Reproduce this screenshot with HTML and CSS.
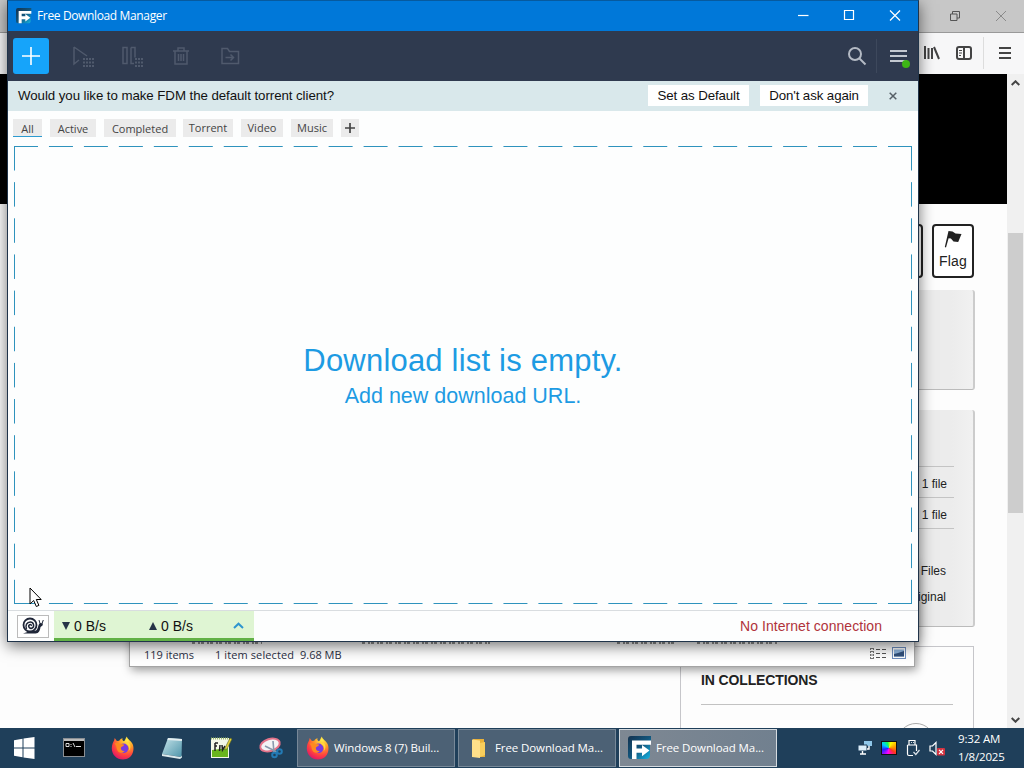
FILE: index.html
```html
<!DOCTYPE html>
<html lang="en">
<head>
<meta charset="UTF-8" />
<meta name="viewport" content="width=device-width, initial-scale=1" />
<title>Free Download Manager</title>
<link rel="stylesheet" href="styles.css">
</head>
<body>

<!-- shared icons -->
<svg class="defs" width="0" height="0">
  <defs>
    <radialGradient id="fox" cx="70%" cy="15%" r="90%">
      <stop offset="0" stop-color="#fff04a"/><stop offset=".4" stop-color="#ff9a26"/><stop offset=".75" stop-color="#ff4040"/><stop offset="1" stop-color="#e01a66"/>
    </radialGradient>
    <linearGradient id="fdmBg" x1="0" y1="0" x2="1" y2="1">
      <stop offset="0" stop-color="#14324f"/><stop offset=".5" stop-color="#12557c"/><stop offset="1" stop-color="#16b8e8"/>
    </linearGradient>
    <linearGradient id="note" x1="0" y1="0" x2="1" y2="1">
      <stop offset="0" stop-color="#c6e4ea"/><stop offset="1" stop-color="#4f95aa"/>
    </linearGradient>
  </defs>
  <symbol id="firefox" viewBox="0 0 24 24">
    <path d="M12 23.4C5.600 23.400.8 18.600.8 12.400.8 9 2 6.300 3.100 4.500L3.700 2l2.200 2.900 2.300-.1C9 3.200 10.400 2.500 11.600 2.200 10.900 3.600 11.600 4.600 13 5.200 14.500 3.800 14.500 2 15.800.4 16.500 3.400 20.200 4.700 21.700 8.200 23.900 13.400 21.900 23.400 12 23.400z" fill="url(#fox)"/>
    <circle cx="12.600" cy="12.300" r="4.800" fill="#7a3be0"/>
    <path d="M3.500 7.500c2-1 4-.7 5.200.3l4.300.7c.3 1.600-2.500 2-3.100 3.200-.4 2.200 1.500 3.700 3.700 3.200-1.800 2.900-6.600 2.300-7.700-1.700-.4-2-.4-3.700-2.400-5.700z" fill="#ff8a1f"/>
    <path d="M14.500 7.500c3 1 4.600 4.500 3.200 7.500 2.500-2.500 2.200-6.500-.5-8.500z" fill="#ffd83d"/>
  </symbol>
  <symbol id="fdm" viewBox="0 0 24 24">
    <path d="M0 3q0-3 3-3h20v5h-1v14q0 4-4 4H3q-3 0-3-3z" fill="url(#fdmBg)"/>
    <path d="M4 4.500h19v4.300H8.500v3.700H14V9l7.500 5.600L14 20.200v-3.500H8.500V23H4z" fill="#fff"/>
  </symbol>
</svg>

<div class="desktop">

  <!-- Browser window at the back -->
  <section class="browser">
    <div class="browser-title">
      <svg class="win-restore" width="12" height="12" viewBox="0 0 12 12"><path d="M1.500 4h6.500v6.500H1.500zM3.500 4V1.500H10.500V8H8" /></svg>
      <svg class="win-x" width="12" height="12" viewBox="0 0 12 12"><path d="M1 1l10 10M11 1L1 11"/></svg>
    </div>
    <div class="browser-bar">
      <svg width="18" height="16" viewBox="0 0 18 16"><path d="M2 1v13M5.500 3v11M9 3v11M11 2l5 12" /></svg>
      <svg width="16" height="14" viewBox="0 0 16 14"><rect x="1" y="1" width="14" height="12" rx="2"/><path d="M8 1v12"/><path class="thin" d="M3 4.500h3M3 7h3M3 9.500h2"/></svg>
      <i class="bar-sep"></i>
      <svg width="12" height="12" viewBox="0 0 12 12"><path d="M0 1h12M0 6h12M0 11h12"/></svg>
    </div>
    <div class="browser-view">
      <div class="page">
        <div class="hero"></div>
        <div class="actions">
          <div class="action"></div>
          <div class="action">
            <svg width="18" height="18" viewBox="0 0 18 18"><path d="M4.500 1l4 .5 3 2 6 .5-3.300 8-4.700-.5-2.600-3-2.300-.2L2 17.500.8 17z" fill="#222"/></svg>
            <span>Flag</span>
          </div>
        </div>
        <div class="card views"></div>
        <div class="card options">
          <div class="opt">1 file</div>
          <div class="opt">1 file</div>
          <div class="more">Files</div>
          <div class="more">Original</div>
        </div>
        <div class="collections">
          <h5>IN COLLECTIONS</h5>
          <div class="thumb"></div>
        </div>
      </div>
      <div class="scroll">
        <svg width="9" height="6" viewBox="0 0 9 6"><path d="M.7 5L4.500 1.300 8.300 5"/></svg>
        <div class="track"><div class="thumb-bar"></div></div>
        <svg width="9" height="6" viewBox="0 0 9 6"><path d="M.7 1L4.500 4.700 8.300 1"/></svg>
      </div>
    </div>
  </section>

  <!-- File explorer, only its status bar shows -->
  <section class="explorer">
    <div class="peek"><i></i><i></i><i></i><i></i></div>
    <div class="explorer-status">
      <span class="count">119 items</span>
      <span class="selected">1 item selected</span>
      <span class="size">9.68 MB</span>
      <svg width="18" height="13" viewBox="0 0 18 13"><path d="M1.500 1v11M4.500 1v11" stroke="#777" stroke-dasharray="2 1"/><path d="M1 1.500h4M1 4.500h4M1 8h4M1 11.500h4" stroke="#777"/><path d="M7 2.500h10M7 6.500h10M7 10.500h10" stroke="#555" stroke-dasharray="4 2"/></svg>
      <svg width="15" height="13" viewBox="0 0 15 13"><rect x=".5" y=".5" width="13" height="11" fill="#fff" stroke="#6f8fc0"/><path d="M2 2.500h10v7H2z" fill="#8fb4dc"/><path d="M2 9.500V7l4-1 6-2v5.500z" fill="#31507c"/></svg>
    </div>
  </section>

  <!-- FDM -->
  <section class="fdm">
    <div class="titlebar">
      <svg width="16" height="16"><use href="#fdm"/></svg>
      <span class="title">Free Download Manager</span>
      <div class="controls">
        <svg width="12" height="12" viewBox="0 0 12 12"><path d="M1 5.500h10.500"/></svg>
        <svg width="12" height="12" viewBox="0 0 12 12"><path d="M1.500.5h9v9h-9z"/></svg>
        <svg width="12" height="12" viewBox="0 0 12 12"><path d="M1 .5l10 10M11 .5L1 10.500"/></svg>
      </div>
    </div>

    <div class="toolbar">
      <button class="add" aria-label="Add"><svg width="18" height="18" viewBox="0 0 18 18"><path d="M9 0v18M0 9h18" stroke="#fff" stroke-width="1.600"/></svg></button>
      <svg class="tool" width="24" height="24" viewBox="0 0 24 24"><path d="M3 3v17l5-4M3 3l13 9"/><path class="dots" d="M12 15h11M12 18.500h11M12 22h11"/></svg>
      <svg class="tool" width="24" height="24" viewBox="0 0 24 24"><path d="M3 3.500h4v16H3zM11 3.500h4v10M11 3.500v16h3"/><path class="dots" d="M15 15h9M15 18.500h9M15 22h9"/></svg>
      <svg class="tool" width="24" height="24" viewBox="0 0 24 24"><path d="M4 7h16M9 7V4h6v3M6 7v13h12V7M9.500 10v7M12 10v7M14.500 10v7"/></svg>
      <svg class="tool" width="24" height="24" viewBox="0 0 24 24"><path d="M4 4.500h5.500l2 3h9v12H4zM7.500 13.500h8M12.500 10.500l3 3-3 3"/></svg>
      <svg class="search" width="20" height="20" viewBox="0 0 20 20"><circle cx="8" cy="8" r="6"/><path d="M12.500 12.500l6 6"/></svg>
      <div class="menu">
        <svg width="17" height="14" viewBox="0 0 17 14"><path d="M0 2h17M0 7h17M0 12h17" stroke="#c3c8d0" stroke-width="2"/></svg>
        <i class="dot"></i>
      </div>
    </div>

    <div class="banner">
      <span class="question">Would you like to make FDM the default torrent client?</span>
      <button class="set">Set as Default</button>
      <button class="dont">Don't ask again</button>
      <svg width="8" height="8" viewBox="0 0 8 8"><path d="M.7.700l6.600 6.600M7.300.700L.7 7.300"/></svg>
    </div>

    <div class="tabs">
      <span class="tab all">All</span>
      <span class="tab active-tab">Active</span>
      <span class="tab completed">Completed</span>
      <span class="tab torrent">Torrent</span>
      <span class="tab video">Video</span>
      <span class="tab music">Music</span>
      <span class="tab plus"><svg width="10" height="10" viewBox="0 0 10 10"><path d="M5 0v10M0 5h10" stroke="#444" stroke-width="1.700"/></svg></span>
    </div>

    <div class="dropzone">
      <svg class="dashes" width="899" height="459" viewBox="0 0 899 459">
        <path class="h" d="M0 .5h899M0 457.500h899"/>
        <path class="v" d="M.5 0v458M897.500 0v458"/>
      </svg>
      <div class="empty">Download list is empty.</div>
      <div class="hint">Add new download URL.</div>
    </div>

    <div class="bottom">
      <button class="snail" aria-label="Snail mode">
        <svg width="24" height="18" viewBox="0 0 24 18"><path d="M2 16.500h12.500c3.500 0 4.500-3 5-6.500l2-1.500.5-2-2.500-.5c-2.500 0-2 6-4.500 7.500L8 14.500z" fill="#1f2638"/><circle cx="9" cy="8" r="6.500" fill="#fff" stroke="#1f2638" stroke-width="1.800"/><path d="M5.500 12C4 8.500 5.800 5 9.300 5s4.600 4.800 1.500 6.200c-2.600.9-4.200-2.400-2.100-3.600 1.300-.4 1.900.5 1.300 1.300" fill="none" stroke="#1f2638" stroke-width="1.500"/><path d="M19 6.500l-1-3.500M21 6.500l1.300-3.500" stroke="#1f2638"/></svg>
      </button>
      <div class="speed">
        <svg width="8" height="8" viewBox="0 0 8 8"><path d="M0 0h8L4 8z" fill="#263347"/></svg>
        <span class="down">0 B/s</span>
        <svg width="8" height="8" viewBox="0 0 8 8"><path d="M0 8h8L4 0z" fill="#263347"/></svg>
        <span class="up">0 B/s</span>
        <svg class="chev" width="11" height="7" viewBox="0 0 11 7"><path d="M1 6l4.500-4.300L10 6" fill="none" stroke="#2f95cf" stroke-width="2"/></svg>
      </div>
      <span class="offline">No Internet connection</span>
    </div>
  </section>

  <svg class="cursor" width="13" height="21" viewBox="0 0 13 21"><path d="M1 1v16l3.700-3.500 2.600 6 2.600-1.100-2.600-5.900h4.900z" fill="#fff" stroke="#000"/></svg>

  <!-- Taskbar -->
  <footer class="taskbar">
    <div class="pins">
      <svg width="22" height="22" viewBox="0 0 22 22"><path d="M1 3.200l8.500-1.400v8.700H1zM10.500 1.600L21.500 0v10.500h-11zM1 11.500h8.500v8.700L1 18.800zM10.500 11.500h11V22l-11-1.600z" fill="#fff"/></svg>
      <svg width="24" height="20" viewBox="0 0 24 20"><rect x="1.500" y=".5" width="21" height="18" fill="#000" stroke="#8a8f94"/><path d="M2 2h20" stroke="#bbb" stroke-width="2"/><path d="M4 5.500h3v3H4zM9 6v1M9 8v1M11 5l2 4M14 8.500h5" stroke="#ddd" fill="none"/></svg>
      <svg width="24" height="24"><use href="#firefox"/></svg>
      <svg width="24" height="24" viewBox="0 0 24 24"><path d="M8 2l14 1-.5 18L2 18z" fill="url(#note)"/><path d="M8 2l14 1-.1 2L7.400 4z" fill="#e4eef0"/><path d="M2 18l18.500 3 1-1.500.5 2-2 1.500L2 20z" fill="#dce9ec"/></svg>
      <svg width="24" height="24" viewBox="0 0 24 24"><path d="M2 2h18v20H2z" fill="#f4f7e8"/><path d="M3 14l16-2v9H3z" fill="#69b51d"/><path d="M2 2.500h18" stroke="#9bb96b" stroke-dasharray="1 1" stroke-width="2"/><path d="M6 7v8M6 7h3M6 10h2M10.500 15l.5-6M13 9l.5 5 2.500-4" stroke="#222" fill="none" stroke-width="1.500"/><path d="M16 12l5-10 2 1-5 10-2 1z" fill="#e7d23c" stroke="#55651f" stroke-width=".6"/></svg>
      <svg width="26" height="24" viewBox="0 0 26 24"><ellipse cx="12" cy="9" rx="10" ry="6" transform="rotate(-17 12 9)" fill="#f3f3f5" stroke="#e4738a" stroke-width="2"/><path d="M7 10l12 6M15 5l1 12" stroke="#8999ad" stroke-width="1.600"/><circle cx="16.500" cy="19" r="2.300" fill="none" stroke="#237ab5" stroke-width="2"/><circle cx="21.500" cy="15.500" r="2.300" fill="none" stroke="#237ab5" stroke-width="2"/></svg>
    </div>
    <div class="task"><svg width="24" height="24"><use href="#firefox"/></svg><span>Windows 8 (7) Buil...</span></div>
    <div class="task folder"><svg width="24" height="24" viewBox="0 0 24 24"><path d="M6 3h11v3h1v15H6z" fill="#e8b13a"/><path d="M5 3.500l8 1V22l-8-1z" fill="#ffe08a"/><path d="M13 7l5-1v13l-5 2z" fill="#f7cd5c"/></svg><span>Free Download Ma...</span></div>
    <div class="task current"><svg width="24" height="24"><use href="#fdm"/></svg><span>Free Download Ma...</span></div>
    <div class="tray">
      <svg width="16" height="16" viewBox="0 0 16 16"><path d="M7 1h8v5H7z" fill="#8fc7ea"/><path d="M1 5h9v6H1z" fill="#dceefa" stroke="#1f3f5b"/><path d="M5.500 11v3M3 14h6M12 6v3h-2" stroke="#fff" fill="none" stroke-width="1.400"/></svg>
      <i class="palette"></i>
      <svg width="16" height="18" viewBox="0 0 16 18"><path d="M4 6V1.500h6V6M2.500 6h9v6M2.500 6v9q0 1.500 1.500 1.500h4" fill="none" stroke="#fff" stroke-width="1.200"/><path d="M6 3.500h.8M8 3.500h.8" stroke="#fff"/><path d="M8.500 13l2.300 2.500L14.500 11" fill="none" stroke="#dbe3ea" stroke-width="1.200"/></svg>
      <svg width="16" height="15" viewBox="0 0 16 15"><path d="M1 5h2.500L7 1.500v12L3.500 10H1z" fill="none" stroke="#fff" stroke-width="1.200"/><rect x="8" y="7" width="8" height="7.500" rx="1" fill="#d33340"/><path d="M10 8.800l4 4M14 8.800l-4 4" stroke="#fff" stroke-width="1.200"/></svg>
    </div>
    <div class="clock"><span>9:32 AM</span><span>1/8/2025</span></div>
  </footer>
</div>

</body>
</html>
```
FILE: styles.css
```css
* {
  box-sizing: border-box;
}
body {
  margin: 0;
  font-family: "Liberation Sans", Arial, sans-serif;
  color: #111;
}
svg {
  display: block;
  flex-shrink: 0;
}
button {
  font: inherit;
  padding: 0;
  border: none;
}
.defs {
  position: absolute;
}
.desktop {
  position: relative;
  width: 1024px;
  height: 768px;
  overflow: hidden;
  background: #fdfdfd;
}

/* Browser */
.browser {
  position: absolute;
  inset: 0 0 40px 0;
  display: flex;
  flex-direction: column;
}
.browser-title {
  height: 33px;
  background: #c7c7c7;
  border-bottom: 1px solid #999;
  display: flex;
  justify-content: flex-end;
  align-items: center;
  gap: 34px;
  padding-right: 17px;
  fill: none;
  stroke: #555;
}
.win-x {
  stroke: #8a8a8a;
}
.browser-bar {
  height: 41px;
  background: #f7f7f8;
  display: flex;
  justify-content: flex-end;
  align-items: center;
  padding: 0 13px 2px 0;
  fill: none;
  stroke: #444;
  stroke-width: 2;
}
.browser-bar svg:nth-child(2) {
  margin-left: 15px;
}
.browser-bar .thin {
  stroke-width: 1;
}
.bar-sep {
  width: 1px;
  height: 32px;
  background: #ddd;
  margin: 0 15px 0 11px;
}
.browser-view {
  flex: 1;
  display: flex;
  min-height: 0;
}
.page {
  width: 1007px;
  overflow: hidden;
  display: flex;
  flex-direction: column;
  align-items: flex-end;
  padding-right: 33px;
}
.hero {
  width: 1007px;
  height: 130px;
  margin-right: -33px;
  background: #000;
  flex-shrink: 0;
}
.actions {
  display: flex;
  gap: 9px;
  margin: 20px 0 12px 0;
}
.action {
  width: 42px;
  height: 54px;
  border: 2px solid #222;
  border-radius: 4px;
  background: #fff;
  font-size: 14px;
  display: flex;
  flex-direction: column;
  align-items: center;
  padding-top: 4px;
  gap: 5px;
}
.action span {
  line-height: 16px;
  letter-spacing: .2px;
  color: #222;
}
.card {
  width: 294px;
  flex-shrink: 0;
  margin-right: -1px;
  background: linear-gradient(90deg, #ececec 270px, #f1f1f1);
  border-right: 2px solid #ccc;
  border-bottom: 1px solid #bbb;
  border-radius: 3px;
}
.views {
  height: 100px;
}
.options {
  height: 217px;
  margin-top: 20px;
  padding: 56px 19px 0;
  font-size: 12px;
  text-align: right;
  color: #222;
}
.opt {
  height: 31px;
  line-height: 35px;
  border-top: 1px solid #c4c4c4;
  padding-right: 7px;
}
.opt + .more {
  border-top: 1px solid #c4c4c4;
  padding-top: 29px;
}
.more {
  line-height: 26px;
  padding-right: 8px;
}
.collections {
  width: 294px;
  height: 120px;
  flex-shrink: 0;
  margin-top: 19px;
  border: 1px solid #c6c6ca;
  padding: 24px 20px 0;
}
.collections h5 {
  margin: 0;
  font-size: 14px;
  line-height: 18px;
  letter-spacing: -.13px;
  color: #222;
  padding-bottom: 15px;
  border-bottom: 1px solid #c2c2c2;
}
.thumb {
  width: 38px;
  height: 38px;
  border: 1px solid #aaa;
  border-radius: 50%;
  margin: 18px 0 0 196px;
}
.scroll {
  width: 17px;
  background: #f0f0f0;
  display: flex;
  flex-direction: column;
  align-items: center;
  padding: 6px 0 5px;
  fill: none;
  stroke: #444;
  stroke-width: 2;
}
.track {
  flex: 1;
  width: 15px;
  padding-top: 147px;
}
.thumb-bar {
  height: 280px;
  background: #cdcdcd;
}

/* Explorer */
.explorer {
  position: absolute;
  left: 129px;
  top: 560px;
  width: 786px;
  height: 107px;
  background: #fff;
  border: 1px solid #a5a5a5;
  box-shadow: 2px 3px 9px rgba(0,0,0,.4);
  display: flex;
  flex-direction: column;
  justify-content: flex-end;
}
.peek {
  display: flex;
  height: 3px;
  padding-left: 62px;
  opacity: .5;
}
.peek i {
  width: 70px;
  background: repeating-linear-gradient(90deg, #222 0 3px, transparent 3px 6px, #222 6px 8px, transparent 8px 9px);
}
.peek i:nth-child(2) {
  width: 128px;
  margin-left: 100px;
}
.peek i:nth-child(3) {
  width: 60px;
  margin-left: 127px;
}
.peek i:nth-child(4) {
  width: 80px;
  margin-left: 20px;
}
.explorer-status {
  height: 22px;
  padding: 0 7px 2px 14px;
  display: flex;
  align-items: center;
  font: 11px "Open Sans", sans-serif;
  color: #2b3045;
}
.count {
  width: 71px;
}
.selected {
  width: 85px;
  white-space: nowrap;
  letter-spacing: .1px;
}
.size {
  margin-right: auto;
}
.explorer-status svg {
  position: relative;
  top: -1px;
}
.explorer-status svg + svg {
  margin-left: 5px;
}

/* FDM window */
.fdm {
  position: absolute;
  left: 7px;
  top: 0;
  width: 912px;
  height: 642px;
  background: #fdfefe;
  border: 1px solid #20344a;
  border-top-color: #065a9f;
  box-shadow: 0 4px 14px rgba(0,0,0,.55);
  display: flex;
  flex-direction: column;
}
.titlebar {
  height: 30px;
  background: #0078d9;
  color: #fff;
  display: flex;
  align-items: center;
  padding: 0 17px 1px 8px;
}
.title {
  font: 12px "Open Sans", sans-serif;
  margin-left: 5px;
  letter-spacing: -.36px;
}
.controls {
  margin-left: auto;
  display: flex;
  gap: 34px;
  fill: none;
  stroke: #fff;
  stroke-width: 1.2;
}
.toolbar {
  height: 50px;
  background: #2f3a4f;
  display: flex;
  align-items: center;
  padding: 0 7px 0 5px;
}
.add {
  width: 36px;
  height: 36px;
  background: #16a4fa;
  border-radius: 3px;
  display: flex;
  align-items: center;
  justify-content: center;
  margin-right: -2px;
}
.tool {
  margin-left: 25px;
  fill: none;
  stroke: #505a6d;
  stroke-width: 1.5;
}
.tool:nth-child(2) {
  margin-left: 24px;
}
.dots {
  stroke-width: 2;
  stroke-dasharray: 2 1;
}
.search {
  margin-left: auto;
  margin-right: 9px;
  fill: none;
  stroke: #b4bac4;
  stroke-width: 2;
}
.menu {
  position: relative;
  height: 34px;
  border-left: 1px solid #3d485c;
  padding: 10px 4px 0 13px;
}
.dot {
  position: absolute;
  right: 1px;
  top: 21px;
  width: 8px;
  height: 8px;
  border-radius: 50%;
  background: #3db516;
}
.banner {
  height: 30px;
  background: #d9e8eb;
  display: flex;
  align-items: center;
  padding: 0 21px 2px 10px;
  stroke: #555f66;
  stroke-width: 1.5;
}
.banner span, .banner button {
  stroke: none;
}
.question {
  font-size: 13.3px;
  margin-right: auto;
  letter-spacing: -.07px;
}
.banner button {
  height: 21px;
  background: #fff;
  color: #111;
  font-size: 13.3px;
  letter-spacing: -.1px;
}
.banner .set {
  width: 101px;
}
.banner .dont {
  width: 108px;
  margin: 0 21px 0 11px;
}
.banner svg {
  position: relative;
  top: 1px;
}
.tabs {
  display: flex;
  align-items: flex-start;
  padding: 8px 5px 0;
  height: 35px;
  font: 11px "Open Sans", sans-serif;
  color: #444;
}
.tab {
  height: 18px;
  line-height: 19px;
  background: #ebebeb;
  text-align: center;
}
.all {
  width: 29px;
  margin-right: 8px;
  border-bottom: 1px solid #2d9bd0;
}
.active-tab {
  width: 46px;
  margin-right: 8px;
}
.completed {
  width: 72px;
  margin-right: 7px;
}
.torrent {
  width: 50px;
  margin-right: 8px;
}
.torrent, .video, .music {
  line-height: 18px;
}
.video {
  width: 42px;
  margin-right: 8px;
}
.music {
  width: 42px;
  margin-right: 8px;
}
.plus {
  width: 18px;
  display: flex;
  align-items: center;
  justify-content: center;
}
.dropzone {
  height: 464px;
  position: relative;
  text-align: center;
  color: #1d9be3;
  padding-top: 196px;
}
.dashes {
  position: absolute;
  left: 6px;
  top: 0;
  fill: none;
  stroke: #2f93bd;
}
.dashes .h {
  stroke-dasharray: 24 10.96;
}
.dashes .v {
  stroke-dasharray: 24.5 11.65;
}
.empty {
  font-size: 31px;
  line-height: 38px;
  letter-spacing: .2px;
}
.hint {
  font-size: 21.5px;
  line-height: 32px;
}
.bottom {
  flex: 1;
  border-top: 1px solid #d9dde0;
  display: flex;
  align-items: center;
  padding: 0 36px 0 9px;
  font-size: 14px;
}
.snail {
  width: 32px;
  height: 23px;
  border: 1px solid #bbb;
  background: #fff;
  display: flex;
  align-items: center;
  justify-content: center;
}
.speed {
  width: 200px;
  height: 30px;
  margin-left: 5px;
  background: #dff5d3;
  border-bottom: 3px solid #62b146;
  display: flex;
  align-items: center;
  padding: 2px 10px 0 8px;
}
.speed span {
  margin-left: 4px;
  font-size: 14px;
}
.down {
  width: 75px;
}
.chev {
  margin-left: auto;
}
.offline {
  margin-left: auto;
  color: #b0333b;
  letter-spacing: .05px;
}

.cursor {
  position: absolute;
  left: 29px;
  top: 587px;
}

/* Taskbar */
.taskbar {
  position: absolute;
  left: 0;
  bottom: 0;
  width: 1024px;
  height: 40px;
  background: #1f3f5a;
  color: #fff;
  font: 12px "Open Sans", sans-serif;
  display: flex;
  align-items: center;
}
.pins {
  width: 297px;
  display: flex;
  align-items: center;
  padding-left: 13px;
  gap: 25px;
}
.pins svg:first-child {
  margin-right: 2px;
}
.task {
  width: 158px;
  height: 38px;
  margin-right: 3px;
  background: #4c6175;
  border: 1px solid #778898;
  display: flex;
  align-items: center;
  padding-left: 8px;
  gap: 4px;
  font-size: 11.5px;
  letter-spacing: -.1px;
  white-space: nowrap;
}
.task span {
  padding-bottom: 1px;
}
.current {
  background: linear-gradient(90deg, #7e8893, #71808f);
  border-color: #d5dbe0;
}
.tray {
  display: flex;
  align-items: center;
  gap: 8px;
  margin-left: 77px;
}
.palette {
  width: 16px;
  height: 14px;
  border: 1px solid #111;
  background: conic-gradient(from 20deg, #ff0, #f80 20%, #f32 30%, #f0f 48%, #22f 65%, #0cf 78%, #1f5 90%, #ff0);
}
.clock {
  flex: 1;
  display: flex;
  flex-direction: column;
  line-height: 18px;
  padding: 0 0 1px 13px;
  font-size: 11.5px;
  letter-spacing: -.15px;
}
```
